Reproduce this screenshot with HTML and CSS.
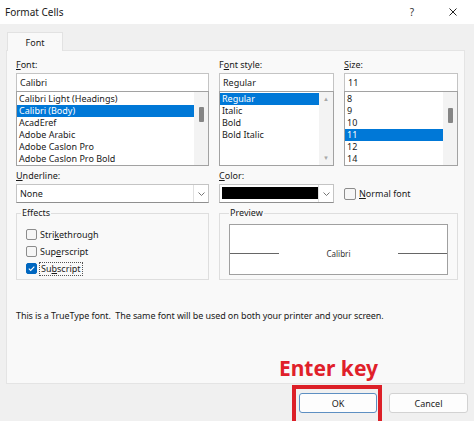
FILE: index.html
```html
<!DOCTYPE html>
<html>
<head>
<meta charset="utf-8">
<link rel="stylesheet" href="styles.css">
</head>
<body>
<div class="titlebar">
  <span class="title">Format Cells</span>
  <span class="help">?</span>
  <svg class="close" width="8" height="8" viewBox="0 0 8 8"><path d="M0.5 0.5 L7.5 7.5 M7.5 0.5 L0.5 7.5" stroke="#222" stroke-width="1"/></svg>
</div>
<div class="tabs"><div class="tab">Font</div></div>
<div class="panel">
  <div class="grid">
    <div class="field">
      <div class="label"><u>F</u>ont:</div>
      <div class="input">Calibri</div>
      <div class="list">
        <div class="items">
          <div class="item">Calibri Light (Headings)</div>
          <div class="item sel">Calibri (Body)</div>
          <div class="item">AcadEref</div>
          <div class="item">Adobe Arabic</div>
          <div class="item">Adobe Caslon Pro</div>
          <div class="item">Adobe Caslon Pro Bold</div>
        </div>
        <div class="scroll"><div class="thumb"></div></div>
      </div>
    </div>
    <div class="field">
      <div class="label">F<u>o</u>nt style:</div>
      <div class="input">Regular</div>
      <div class="list">
        <div class="items">
          <div class="item sel">Regular</div>
          <div class="item">Italic</div>
          <div class="item">Bold</div>
          <div class="item">Bold Italic</div>
        </div>
        <div class="scroll arrows"><span class="arrow">▲</span><span class="arrow">▼</span></div>
      </div>
    </div>
    <div class="field">
      <div class="label"><u>S</u>ize:</div>
      <div class="input">11</div>
      <div class="list">
        <div class="items">
          <div class="item">8</div>
          <div class="item">9</div>
          <div class="item">10</div>
          <div class="item sel">11</div>
          <div class="item">12</div>
          <div class="item">14</div>
        </div>
        <div class="scroll size"><div class="thumb"></div></div>
      </div>
    </div>

    <div class="field">
      <div class="label"><u>U</u>nderline:</div>
      <div class="select">
        <span class="value">None</span>
        <span class="drop"><svg width="7" height="4" viewBox="0 0 7 4"><polyline points="0.5,0.5 3.5,3.5 6.5,0.5" fill="none" stroke="#666" stroke-width="0.9"/></svg></span>
      </div>
    </div>
    <div class="field">
      <div class="label"><u>C</u>olor:</div>
      <div class="select">
        <span class="swatch"></span>
        <span class="drop"><svg width="7" height="4" viewBox="0 0 7 4"><polyline points="0.5,0.5 3.5,3.5 6.5,0.5" fill="none" stroke="#666" stroke-width="0.9"/></svg></span>
      </div>
    </div>
    <div class="field bottom">
      <label class="check normal"><span class="box"></span><span><u>N</u>ormal font</span></label>
    </div>

    <fieldset class="group effects">
      <legend>Effects</legend>
      <label class="check"><span class="box"></span><span>Stri<u>k</u>ethrough</span></label>
      <label class="check"><span class="box"></span><span>Sup<u>e</u>rscript</span></label>
      <label class="check"><span class="box on"><svg width="9" height="9" viewBox="0 0 9 9"><polyline points="1.8,4.6 3.7,6.4 7.3,2.6" fill="none" stroke="#fff" stroke-width="1.1"/></svg></span><span class="focus">Su<u>b</u>script</span></label>
    </fieldset>
    <fieldset class="group preview">
      <legend>Preview</legend>
      <div class="pbox">
        <div class="prow"><span class="pline"></span><span class="ptext">Calibri</span><span class="pline"></span></div>
      </div>
    </fieldset>
  </div>
  <p class="info">This is a TrueType font.&nbsp; The same font will be used on both your printer and your screen.</p>
</div>
<div class="footer">
  <div class="ok-wrap">
    <span class="enter-key">Enter key</span>
    <button class="btn ok">OK</button>
    <span class="redbox"></span>
  </div>
  <button class="btn">Cancel</button>
</div>
</body>
</html>
```
FILE: styles.css
```css
html, body {
  margin: 0;
  padding: 0;
}
body {
  width: 474px;
  height: 421px;
  overflow: hidden;
  background: #f0f0f0;
  font-family: "Noto Sans", "Open Sans", sans-serif;
  font-size: 9px;
  color: #1a1a1a;
}
u { text-decoration: underline; text-underline-offset: 1px; }

.titlebar {
  height: 24px;
  background: #ffffff;
  display: flex;
  align-items: center;
  padding-left: 5px;
}
.title { font-size: 10px; color: #1a1a1a; flex: 1; }
.help { font-size: 10px; color: #333; margin-right: 35px; }
.close { margin-right: 17px; }

.tabs {
  height: 26px;
  box-sizing: border-box;
  padding: 7px 0 0 7px;
  display: flex;
  align-items: flex-end;
}
.tab {
  width: 56px;
  height: 19px;
  box-sizing: border-box;
  background: #f9f9f9;
  border: 1px solid #e2e2e2;
  border-bottom: none;
  margin-bottom: -1px;
  position: relative;
  z-index: 1;
  display: flex;
  align-items: center;
  justify-content: center;
  font-size: 9px;
}

.panel {
  margin-left: 6px;
  width: 459px;
  height: 334px;
  box-sizing: border-box;
  background: #f9f9f9;
  border: 1px solid #e4e4e4;
  padding: 8px 6px 0 9px;
}
.grid {
  display: grid;
  grid-template-columns: 193px 115px 114px;
  column-gap: 10px;
  row-gap: 4px;
}
.field { display: flex; flex-direction: column; }
.field.bottom { justify-content: flex-end; }
.label {
  height: 12px;
  line-height: 12px;
  margin-bottom: 2px;
}
.input {
  height: 19px;
  box-sizing: border-box;
  background: #fff;
  border: 1px solid #c4c4c4;
  border-bottom-color: #8f8f8f;
  padding-left: 3px;
  line-height: 17px;
}
.list {
  height: 75px;
  box-sizing: border-box;
  margin-top: -1px;
  background: #fff;
  border: 1px solid #a2a2a2;
  display: flex;
  overflow: hidden;
}
.items { flex: 1; padding-top: 1px; overflow: hidden; }
.item {
  height: 12px;
  line-height: 12px;
  padding-left: 2px;
  white-space: nowrap;
}
.item.sel { background: #0078d7; color: #fff; }
.scroll {
  width: 14px;
  background: #f3f3f3;
  display: flex;
  flex-direction: column;
  align-items: center;
  padding-top: 15px;
  box-sizing: border-box;
}
.scroll.size { padding-top: 16px; }
.thumb {
  width: 5px;
  height: 15px;
  background: #858585;
  border-radius: 1px;
}
.scroll.arrows {
  padding: 3px 0 3px;
  justify-content: space-between;
}
.arrow { font-size: 6px; color: #a8a8a8; line-height: 8px; }

.select {
  height: 19px;
  box-sizing: border-box;
  background: #fff;
  border: 1px solid #c4c4c4;
  border-bottom-color: #8f8f8f;
  display: flex;
  align-items: stretch;
}
.select .value { flex: 1; padding-left: 3px; line-height: 17px; }
.swatch {
  flex: 1;
  margin: 2px 0 3px 2px;
  background: #000;
}
.drop {
  width: 14px;
  border-left: 1px solid #e0e0e0;
  display: flex;
  align-items: center;
  justify-content: center;
}

.check {
  display: flex;
  align-items: center;
  height: 17px;
}
.box {
  width: 11px;
  height: 11px;
  box-sizing: border-box;
  border: 1px solid #8c8c8c;
  border-radius: 2px;
  background: #f6f6f6;
  margin-right: 3px;
  display: flex;
  align-items: center;
  justify-content: center;
}
.box.on { background: #0067c0; border-color: #0067c0; }
.normal { height: 19px; }
.normal .box { width: 12px; height: 12px; }
.focus {
  outline: 1px dotted #555;
  outline-offset: 0px;
  padding: 0 1px;
  line-height: 12px;
}

.group {
  margin: 0;
  height: 73px;
  box-sizing: border-box;
  border: 1px solid #dedede;
  padding: 7px 5px 0 4px;
  min-width: 0;
}
.group legend {
  padding: 0 1px;
  line-height: 12px;
  height: 12px;
}
.effects .check { padding-left: 5px; }
.preview { grid-column: 2 / 4; padding: 5px 9px 0 9px; }
.pbox {
  height: 51px;
  box-sizing: border-box;
  background: #fff;
  border: 1px solid #a0a0a0;
  padding-top: 22px;
}
.prow { display: flex; align-items: center; height: 12px; }
.pline { width: 49px; height: 1px; background: #666; }
.ptext { flex: 1; text-align: center; font-size: 8px; color: #333; }

.info {
  margin: 30px 0 0 0;
  line-height: 12px;
  white-space: nowrap;
  letter-spacing: -0.09px;
}

.footer {
  height: 37px;
  box-sizing: border-box;
  display: flex;
  justify-content: flex-end;
  padding: 9px 6px 0 0;
  gap: 12px;
}
.ok-wrap { position: relative; }
.btn {
  width: 79px;
  height: 20px;
  box-sizing: border-box;
  background: #fdfdfd;
  border: 1px solid #d2d2d2;
  border-radius: 3px;
  font-family: "Noto Sans", "Open Sans", sans-serif;
  font-size: 9px;
  color: #1a1a1a;
  padding: 0;
}
.btn.ok { width: 78px; border-color: #5d8fc2; }
.redbox {
  position: absolute;
  left: -7px;
  right: -5px;
  top: -8px;
  bottom: -12px;
  border: 4px solid #dc1f27;
}
.enter-key {
  position: absolute;
  right: -1px;
  bottom: calc(100% + 14px);
  font-size: 21px;
  line-height: 21px;
  font-weight: bold;
  color: #e0202a;
  white-space: nowrap;
}
```
